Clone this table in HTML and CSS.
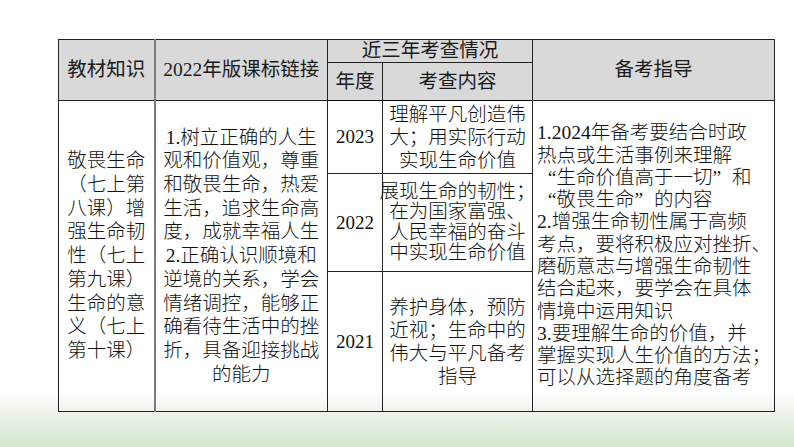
FILE: index.html
```html
<!DOCTYPE html>
<html lang="zh-CN">
<head>
<meta charset="utf-8">
<title>敬畏生命 备考表</title>
<link rel="stylesheet" href="styles.css">
</head>
<body>
<main class="page">
  <table class="grid">
    <colgroup>
      <col class="c1"><col class="c2"><col class="c3"><col class="c4"><col class="c5">
    </colgroup>
    <thead>
      <tr class="h1">
        <th rowspan="2" class="sep-gray">教材知识</th>
        <th rowspan="2">2022年版课标链接</th>
        <th colspan="2">近三年考查情况</th>
        <th rowspan="2">备考指导</th>
      </tr>
      <tr class="h2">
        <th>年度</th>
        <th>考查内容</th>
      </tr>
    </thead>
    <tbody>
      <tr class="r1">
        <td rowspan="3" class="k sep-gray">敬畏生命<br>（七上第<br>八课）增<br>强生命韧<br>性（七上<br>第九课）<br>生命的意<br>义（七上<br>第十课）</td>
        <td rowspan="3" class="k">1.树立正确的人生<br>观和价值观，尊重<br>和敬畏生命，热爱<br>生活，追求生命高<br>度，成就幸福人生<br>2.正确认识顺境和<br>逆境的关系，学会<br>情绪调控，能够正<br>确看待生活中的挫<br>折，具备迎接挑战<br>的能力</td>
        <td class="yr">2023</td>
        <td class="ct"><div class="wide">理解平凡创造伟<br>大；用实际行动<br>实现生命价值</div></td>
        <td rowspan="3" class="gd">1.2024年备考要结合时政<br>热点或生活事例来理解<br><span class="ql">“</span>生命价值高于一切<span class="qr">”</span>和<br><span class="ql">“</span>敬畏生命<span class="qr">”</span>的内容<br>2.增强生命韧性属于高频<br>考点，要将积极应对挫折、<br>磨砺意志与增强生命韧性<br>结合起来，要学会在具体<br>情境中运用知识<br>3.要理解生命的价值，并<br>掌握实现人生价值的方法；<br>可以从选择题的角度备考</td>
      </tr>
      <tr class="r2">
        <td class="yr">2022</td>
        <td class="ct"><div class="wide tight">展现生命的韧性；<br>在为国家富强、<br>人民幸福的奋斗<br>中实现生命价值</div></td>
      </tr>
      <tr class="r3">
        <td class="yr">2021</td>
        <td class="ct"><div class="wide">养护身体，预防<br>近视；生命中的<br>伟大与平凡备考<br>指导</div></td>
      </tr>
    </tbody>
  </table>
</main>
</body>
</html>
```

FILE: styles.css
```css
html {
  background: linear-gradient(to bottom, #ffffff 0px, #ffffff 392px, #eef4ec 412px, #d4e6ce 447px);
  min-height: 100%;
}
body {
  margin: 0;
  font-family: "Liberation Serif", "Noto Sans CJK SC", serif;
  color: #111;
}
.page {
  padding: 39px 0 0 58px;
}
.grid {
  border-collapse: collapse;
  table-layout: fixed;
  width: 716px;
  font-size: 19.5px;
  border: 1.5px solid #000;
}
.c1 { width: 96px; }
.c2 { width: 173px; }
.c3 { width: 55px; }
.c4 { width: 150px; }
.c5 { width: 242px; }

th, td {
  border: 1px solid #222;
  padding: 0;
  vertical-align: middle;
  text-align: center;
  white-space: nowrap;
}
th {
  background: #d9d9d9;
  font-weight: 400;
  color: #1a1a1a;
  line-height: 22px;
}
thead tr.h2 th {
  border-bottom: 1.5px solid #000;
}
.h1 { height: 23px; }
.h2 { height: 38px; }
.r1 { height: 73px; }
.r2 { height: 98px; }
.r3 { height: 140px; }

.sep-gray {
  border-right: 2px solid #7c7c7c;
}
td {
  font-weight: 300;
}
.k {
  line-height: 23.7px;
}
.yr {
  font-size: 19px;
}
.ct .wide {
  margin: 0 -6px;
  line-height: 23px;
}
.ct .tight {
  line-height: 20.5px;
}
.gd {
  text-align: left;
  padding-left: 4px;
  line-height: 22.3px;
}
.ql, .qr {
  display: inline-block;
  width: 1em;
  line-height: 1;
}
.ql { text-align: right; }
.qr { text-align: left; }
```
